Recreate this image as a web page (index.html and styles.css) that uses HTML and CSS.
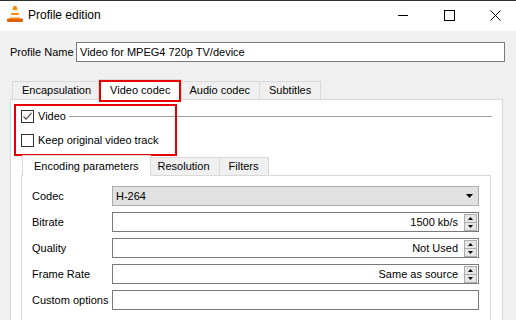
FILE: index.html
```html
<!DOCTYPE html>
<html lang="en">
	<head>
		<meta charset="utf-8" />
		<title>Profile edition</title>
		<link rel="stylesheet" href="styles.css">
	</head>

	<body>
		<div class="titlebar">
			<svg class="app-icon" width="16" height="16" viewBox="0 0 16 16">
				<rect x="0" y="12.4" width="16" height="3.6" rx="1.2" fill="#e06000" />
				<path d="M6.6 0h2.8l3.8 13H2.8z" fill="#ff8a00" />
				<path d="M5.4 4h5.2l0.9 3H4.5z" fill="#fff" />
				<path d="M3.9 9h8.2l0.8 2.6H3.1z" fill="#fff" />
			</svg>
			<span class="title">Profile edition</span>
			<div class="controls">
				<span class="ctrl">
					<svg width="10" height="10" viewBox="0 0 10 10"><path d="M0 5.5h10" stroke="#000" /></svg>
				</span>
				<span class="ctrl">
					<svg width="11" height="11" viewBox="0 0 11 11"><rect x="0.5" y="0.5" width="10" height="10" fill="none" stroke="#000" /></svg>
				</span>
				<span class="ctrl">
					<svg width="11" height="11" viewBox="0 0 11 11"><path d="M0.5 0.5l10 10M10.5 0.5l-10 10" stroke="#000" /></svg>
				</span>
			</div>
		</div>

		<div class="name-row">
			<label class="name-label">Profile Name</label>
			<div class="textbox">Video for MPEG4 720p TV/device</div>
		</div>

		<div class="tabs outer-tabs">
			<div class="tab">Encapsulation</div>
			<div class="tab active marked">Video codec</div>
			<div class="tab">Audio codec</div>
			<div class="tab">Subtitles</div>
		</div>

		<div class="panel outer-panel">
			<div class="video-group">
				<div class="check-row">
					<span class="checkbox">
						<svg width="11" height="11" viewBox="0 0 11 11"><path d="M1.5 5.5l2.6 2.6 5.4-6.2" fill="none" stroke="#4a4a4a" stroke-width="1.2" /></svg>
					</span>
					<span>Video</span>
					<span class="group-line"></span>
				</div>
				<div class="check-row">
					<span class="checkbox"></span>
					<span>Keep original video track</span>
				</div>
			</div>

			<div class="tabs inner-tabs">
				<div class="tab active">Encoding parameters</div>
				<div class="tab">Resolution</div>
				<div class="tab">Filters</div>
			</div>

			<div class="panel inner-panel">
				<div class="form-row">
					<span class="field-label">Codec</span>
					<div class="field combo">
						H-264
						<svg class="combo-arrow" width="7" height="4" viewBox="0 0 7 4"><path d="M0 0h7L3.5 4z" fill="#000" /></svg>
					</div>
				</div>
				<div class="form-row">
					<span class="field-label">Bitrate</span>
					<div class="field spin-field">
						1500 kb/s
						<svg class="spin" width="13" height="17" viewBox="0 0 13 17">
							<rect x="0.5" y="0.5" width="12" height="16" fill="#e6e6e6" stroke="#adadad" />
							<path d="M1 8.5h11" stroke="#adadad" />
							<path d="M4 6h5L6.5 3z" fill="#000" />
							<path d="M4 11h5l-2.5 3z" fill="#000" />
						</svg>
					</div>
				</div>
				<div class="form-row">
					<span class="field-label">Quality</span>
					<div class="field spin-field">
						Not Used
						<svg class="spin" width="13" height="17" viewBox="0 0 13 17">
							<rect x="0.5" y="0.5" width="12" height="16" fill="#e6e6e6" stroke="#adadad" />
							<path d="M1 8.5h11" stroke="#adadad" />
							<path d="M4 6h5L6.5 3z" fill="#000" />
							<path d="M4 11h5l-2.5 3z" fill="#000" />
						</svg>
					</div>
				</div>
				<div class="form-row">
					<span class="field-label">Frame Rate</span>
					<div class="field spin-field">
						Same as source
						<svg class="spin" width="13" height="17" viewBox="0 0 13 17">
							<rect x="0.5" y="0.5" width="12" height="16" fill="#e6e6e6" stroke="#adadad" />
							<path d="M1 8.5h11" stroke="#adadad" />
							<path d="M4 6h5L6.5 3z" fill="#000" />
							<path d="M4 11h5l-2.5 3z" fill="#000" />
						</svg>
					</div>
				</div>
				<div class="form-row">
					<span class="field-label">Custom options</span>
					<div class="field"></div>
				</div>
			</div>
		</div>
	</body>
</html>
```

FILE: styles.css
```css
* {
  box-sizing: border-box;
}
body {
  margin: 0;
  width: 516px;
  height: 320px;
  overflow: hidden;
  background: #f0f0f0;
  font-family: "Liberation Sans", Arial, sans-serif;
  font-size: 11px;
  color: #000;
}

/* title bar */
.titlebar {
  display: flex;
  align-items: center;
  height: 31px;
  border-top: 1px solid #2f2f2f;
  background: #fff;
  padding-left: 7px;
}
.app-icon {
  margin-right: 5px;
  margin-bottom: 4px;
}
.title {
  font-size: 12px;
  margin-bottom: 2px;
}
.controls {
  display: flex;
  height: 100%;
  margin-left: auto;
}
.ctrl {
  width: 46px;
  display: flex;
  align-items: center;
  justify-content: center;
  padding-left: 4px;
  padding-bottom: 2px;
}

/* profile name */
.name-row {
  display: flex;
  align-items: center;
  height: 20px;
  margin: 11px 11px 0 10px;
}
.name-label {
  width: 66px;
}
.textbox {
  flex: 1;
  height: 20px;
  line-height: 18px;
  padding-left: 3px;
  border: 1px solid #7a7a7a;
  background: #fff;
}

/* tabs */
.tabs {
  display: flex;
  align-items: flex-end;
  height: 20px;
}
.outer-tabs {
  margin: 17px 0 0 12px;
}
.inner-tabs {
  margin-top: 3px;
  padding-left: 3px;
}
.tab {
  height: 18px;
  line-height: 17px;
  padding: 0 9px;
  margin-right: -1px;
  border: 1px solid #d9d9d9;
  border-bottom: 0;
  background: #f0f0f0;
  white-space: nowrap;
}
.tab.active {
  position: relative;
  z-index: 1;
  height: 21px;
  line-height: 20px;
  padding: 0 11px;
  margin: 0 -3px -1px -2px;
  background: #fff;
}
.tab.marked::after {
  content: "";
  position: absolute;
  left: 0;
  right: 0;
  top: 0;
  bottom: -2px;
  border: 2px solid #e60000;
}

/* panels */
.panel {
  border: 1px solid #d9d9d9;
  background: #fff;
}
.outer-panel {
  height: 240px;
  margin: 0 13px 0 10px;
  padding: 4px 11px 0 10px;
}
.inner-panel {
  height: 160px;
  display: flex;
  flex-direction: column;
  gap: 6px;
  padding: 10px 11px 0 10px;
}

/* checkboxes */
.video-group {
  position: relative;
}
.video-group::before {
  content: "";
  position: absolute;
  left: -7px;
  top: 0;
  width: 159px;
  height: 48px;
  border: 2px solid #e60000;
}
.check-row {
  display: flex;
  align-items: center;
  height: 24px;
}
.checkbox {
  display: flex;
  width: 13px;
  height: 13px;
  margin-right: 4px;
  border: 1px solid #333;
  background: #fff;
}
.group-line {
  flex: 1;
  height: 1px;
  margin: 0 -1px 0 3px;
  background: #a0a0a0;
}

/* form */
.form-row {
  display: flex;
  align-items: center;
  height: 20px;
}
.field-label {
  width: 80px;
  white-space: nowrap;
}
.field {
  flex: 1;
  display: flex;
  align-items: center;
  height: 20px;
  border: 1px solid #7a7a7a;
  background: #fff;
}
.combo {
  padding-left: 3px;
  border-color: #adadad;
  background: #e1e1e1;
}
.combo-arrow {
  margin-left: auto;
  margin-right: 5px;
}
.spin-field {
  justify-content: flex-end;
}
.spin {
  margin-left: 6px;
  margin-right: 1px;
}
```
